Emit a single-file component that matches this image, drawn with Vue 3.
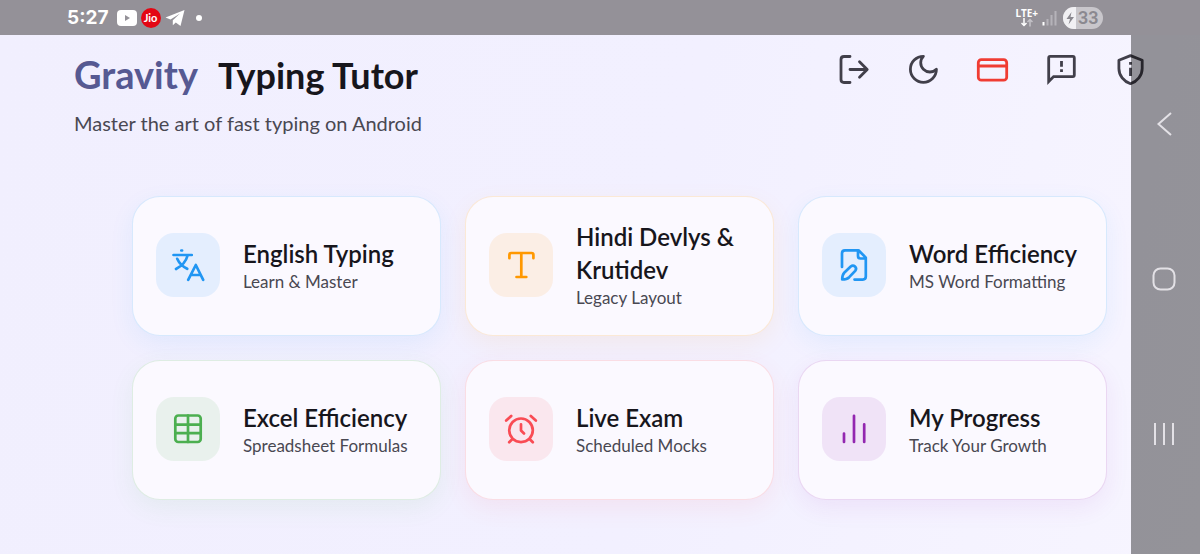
<script setup>
const cards = [
  { id: 'english', title: 'English Typing', sub: 'Learn & Master' },
  { id: 'hindi', title: 'Hindi Devlys & Krutidev', sub: 'Legacy Layout' },
  { id: 'word', title: 'Word Efficiency', sub: 'MS Word Formatting' },
  { id: 'excel', title: 'Excel Efficiency', sub: 'Spreadsheet Formulas' },
  { id: 'exam', title: 'Live Exam', sub: 'Scheduled Mocks' },
  { id: 'progress', title: 'My Progress', sub: 'Track Your Growth' },
]
</script>

<template>
  <div class="device">
    <div class="page">
      <header class="header">
        <div class="brand">
          <h1><span class="accent">Gravity</span><span>Typing Tutor</span></h1>
          <p>Master the art of fast typing on Android</p>
        </div>
        <div class="actions">
          <button type="button" aria-label="Log out">
            <svg viewBox="0 0 37 37"><path d="M14 5.5H8q-3 0-3 3v20q0 3 3 3h6M14 18.5h17M23.5 10.8l7.7 7.7-7.7 7.7" /></svg>
          </button>
          <button type="button" aria-label="Dark mode">
            <svg viewBox="0 0 37 37"><path d="M18.4 5.3a8.7 8.7 0 0 0 13 13 13 13 0 1 1-13-13z" /></svg>
          </button>
          <button type="button" class="pay" aria-label="Payments">
            <svg viewBox="0 0 37 37"><rect x="4.3" y="8.7" width="28.4" height="20.5" rx="3" /><path d="M4.3 15h28.4" /></svg>
          </button>
          <button type="button" aria-label="Feedback">
            <svg viewBox="0 0 37 37">
              <path class="sharp" d="M5.7 30.5V6.9q0-1.5 1.5-1.5h22.600q1.500 0 1.500 1.500v17.200q0 1.500-1.500 1.500H10.600z" />
              <path class="sharp" d="M18.500 10v5.700M18.500 18.300v2.800" />
            </svg>
          </button>
          <button type="button" aria-label="Privacy">
            <svg viewBox="0 0 37 37">
              <path d="M18.5 4.600 30.200 9.200v8.300c0 7-4.900 12.800-11.700 15.200C11.700 30.300 6.900 24.500 6.900 17.500V9.200z" />
              <path class="sharp" d="M18.500 11v2.800M18.500 16.700V25" />
            </svg>
          </button>
        </div>
      </header>

      <main class="grid">
        <button v-for="c in cards" :key="c.id" type="button" class="card" :class="c.id">
          <span class="tile">
            <svg viewBox="0 0 40 40">
              <path v-if="c.id === 'english'" d="M13.300 5.500h.8M5.500 10h18.300M9.200 13.800c2 4.500 5.800 8 10 10M19.600 10.500C18 16.500 13 21.500 8 24M20.200 34.800 27.800 20l7.400 14.800M22.800 30h9.800" />
              <path v-else-if="c.id === 'hindi'" d="M8.400 13.200V9.800q0-1.800 1.800-1.800h20.400q1.800 0 1.800 1.800v3.400M20.300 8v24M15.500 32h9.800" />
              <template v-else-if="c.id === 'word'">
                <path d="M8 22V8.300q0-3 3-3h13.500l7.300 7.300v19q0 3-3 3h-8.300M24 5.500V11q0 2.500 2.500 2.500h5" />
                <path d="M8.200 34.500c0-3 .2-5 2-6.800l6.500-6.200c3-2.500 7 1.200 4.500 4.300l-6 6.400c-1.800 1.800-4 2.300-7 2.300z" />
              </template>
              <template v-else-if="c.id === 'excel'">
                <rect x="7.300" y="6.500" width="25.400" height="26.500" rx="3" />
                <path d="M20 6.500V33M7.300 15.700h25.400M7.300 24.200h25.400" />
              </template>
              <template v-else-if="c.id === 'exam'">
                <circle cx="20" cy="21.300" r="11.800" />
                <path d="M20 15.300v6.200l3 3M5.200 11.500l5-4.500M29.800 7l5 4.500M11.200 30.300 8.200 33.300M28.800 30.300l3 3" />
              </template>
              <path v-else d="M10 24.500v8.500M20 6.800V33M30.200 15.300V33" />
            </svg>
          </span>
          <span class="text">
            <span class="title">{{ c.title }}</span>
            <span class="sub">{{ c.sub }}</span>
          </span>
        </button>
      </main>
    </div>

    <div class="status">
      <span class="time">5:27</span>
      <svg class="youtube" viewBox="0 0 20 16"><rect width="20" height="16" rx="4" fill="#fff" /><path d="M8 5v6l5-3z" fill="#949198" /></svg>
      <span class="jio">Jio</span>
      <svg class="telegram" viewBox="0 0 20 18"><path d="M19.500 1 .5 8.400l5 2L15 4.500 7.800 11.300v5l3-2.800 4.700 3.500z" fill="#fff" /></svg>
      <span class="dot"></span>
      <span class="network">
        <span>LTE+</span>
        <svg viewBox="0 0 12 9"><path d="M3 0v7.500M.5 5 3 7.500 5.500 5" stroke="#fff" /><path d="M9 8.500V1.500M6.500 4 9 1.500 11.500 4" stroke="#c4c2c8" /></svg>
      </span>
      <svg class="signal" viewBox="0 0 15 16"><path d="M1.500 12v3.500" stroke="#fff" /><path d="M5.500 9v6.500M9.500 5v10.500M13.500 1v14.500" stroke="#b5b3b9" /></svg>
      <span class="battery">
        <svg viewBox="0 0 13 22"><path d="M8.500 5 3.500 12H7l-1.500 5.500L11 10H7.500z" fill="#8b8990" /></svg>33
      </span>
    </div>

    <nav class="nav" aria-label="System navigation">
      <button type="button" aria-label="Back"><svg viewBox="0 0 26 26"><path d="M20 2 7.500 13 20 24" /></svg></button>
      <button type="button" aria-label="Home"><svg viewBox="0 0 26 26"><rect x="2.500" y="2.500" width="21" height="21" rx="7" /></svg></button>
      <button type="button" aria-label="Recent apps"><svg viewBox="0 0 26 26"><path d="M4 2v22M13 2v22M22 2v22" /></svg></button>
    </nav>
  </div>
</template>

<style>
body { margin: 0; }
</style>

<style scoped>
* { box-sizing: border-box; }
button { font: inherit; color: inherit; background: none; border: 0; padding: 0; }
svg { display: block; fill: none; }

.device {
  display: grid;
  grid-template-columns: 1fr 69px;
  grid-template-rows: 35px 1fr;
  min-height: 100vh;
  font-family: Lato, "Open Sans", sans-serif;
  color: #17161c;
}
.page {
  grid-area: 1 / 1 / -1 / -1;
  padding: 51px 0 48px;
  background: linear-gradient(100deg, #f1effe 0%, #f2f0ff 55%, #f7f5ff 100%);
}
.header {
  display: flex;
  justify-content: space-between;
  align-items: flex-start;
  padding: 0 35px 0 74px;
}
h1 {
  display: flex;
  align-items: baseline;
  gap: 20px;
  margin: 0;
  font-size: 36px;
  line-height: 46px;
  font-weight: 700;
}
.accent { font-size: 38px; color: #565992; }
.brand p {
  margin: 13px 0 0;
  font-size: 20px;
  line-height: 24px;
  color: #494852;
}
.actions { display: flex; }
.actions button {
  display: flex;
  justify-content: center;
  width: 69px;
  color: #413f4a;
}
.actions svg {
  width: 37px;
  height: 37px;
  stroke: currentColor;
  stroke-width: 2.8;
  stroke-linecap: round;
  stroke-linejoin: round;
}
.actions .sharp { stroke-linecap: butt; stroke-linejoin: miter; }
.actions .pay { color: #f03c33; }

.grid {
  display: grid;
  grid-template-columns: repeat(3, 1fr);
  gap: 24px;
  padding: 61px 93px 0 132px;
}
.card {
  display: flex;
  align-items: center;
  gap: 23px;
  min-height: 140px;
  padding: 15px 23px 17px;
  text-align: left;
  background: #fbf9ff;
  border: 1px solid rgb(var(--tone) / 0.16);
  border-radius: 28px;
  box-shadow: 0 8px 24px rgb(var(--tone) / 0.08);
}
.tile {
  display: flex;
  align-items: center;
  justify-content: center;
  flex: none;
  width: 64px;
  height: 64px;
  border-radius: 18px;
  color: rgb(var(--tone));
  background: rgb(var(--tone) / 0.1);
}
.tile svg {
  width: 40px;
  height: 40px;
  stroke: currentColor;
  stroke-width: 2.7;
  stroke-linecap: round;
  stroke-linejoin: round;
}
.english, .word { --tone: 33 150 243; }
.hindi { --tone: 255 152 0; }
.excel { --tone: 76 175 80; }
.exam { --tone: 249 76 84; }
.progress { --tone: 147 39 176; }
.text { display: flex; flex-direction: column; min-width: 0; }
.title { font-size: 24px; line-height: 33px; font-weight: 600; }
.sub { font-size: 17px; line-height: 24px; color: #494852; }

.status {
  grid-area: 1 / 1 / 2 / -1;
  z-index: 1;
  display: flex;
  align-items: center;
  padding: 0 97px 0 67px;
  background: #949198;
  color: #fff;
}
.time { font: 700 19px/24px Inter, sans-serif; margin-right: 8px; }
.youtube { width: 20px; height: 16px; }
.jio {
  width: 20px;
  height: 20px;
  margin: 0 4px;
  border-radius: 50%;
  background: #e30613;
  font: 700 11px/20px Lato, sans-serif;
  text-align: center;
}
.telegram { width: 20px; height: 18px; }
.dot { width: 6px; height: 6px; margin-left: 11px; border-radius: 50%; background: #fff; }
.network {
  display: flex;
  flex-direction: column;
  align-items: center;
  margin-left: auto;
  font: 700 10px/10px "Noto Sans", sans-serif;
}
.network svg { width: 12px; height: 9px; stroke-width: 1.5; }
.signal { width: 15px; height: 16px; margin: 0 6px 0 4px; stroke-width: 2; }
.battery {
  display: flex;
  align-items: center;
  gap: 2px;
  width: 40px;
  height: 22px;
  overflow: hidden;
  border-radius: 11px;
  background: #c8c6cb;
  color: #8b8990;
  font: 600 18px/22px Roboto, sans-serif;
}
.battery svg { flex: none; width: 13px; height: 22px; background: #f1f0f3; }

.nav {
  grid-area: 2 / 2 / 3 / 3;
  z-index: 1;
  display: flex;
  flex-direction: column;
  padding: 12px 4px 43px 0;
  background: rgb(0 0 0 / 0.4);
}
.nav button {
  flex: 1;
  display: flex;
  align-items: center;
  justify-content: center;
}
.nav svg { width: 26px; height: 26px; stroke: #e3e1e6; stroke-width: 2; }
</style>
